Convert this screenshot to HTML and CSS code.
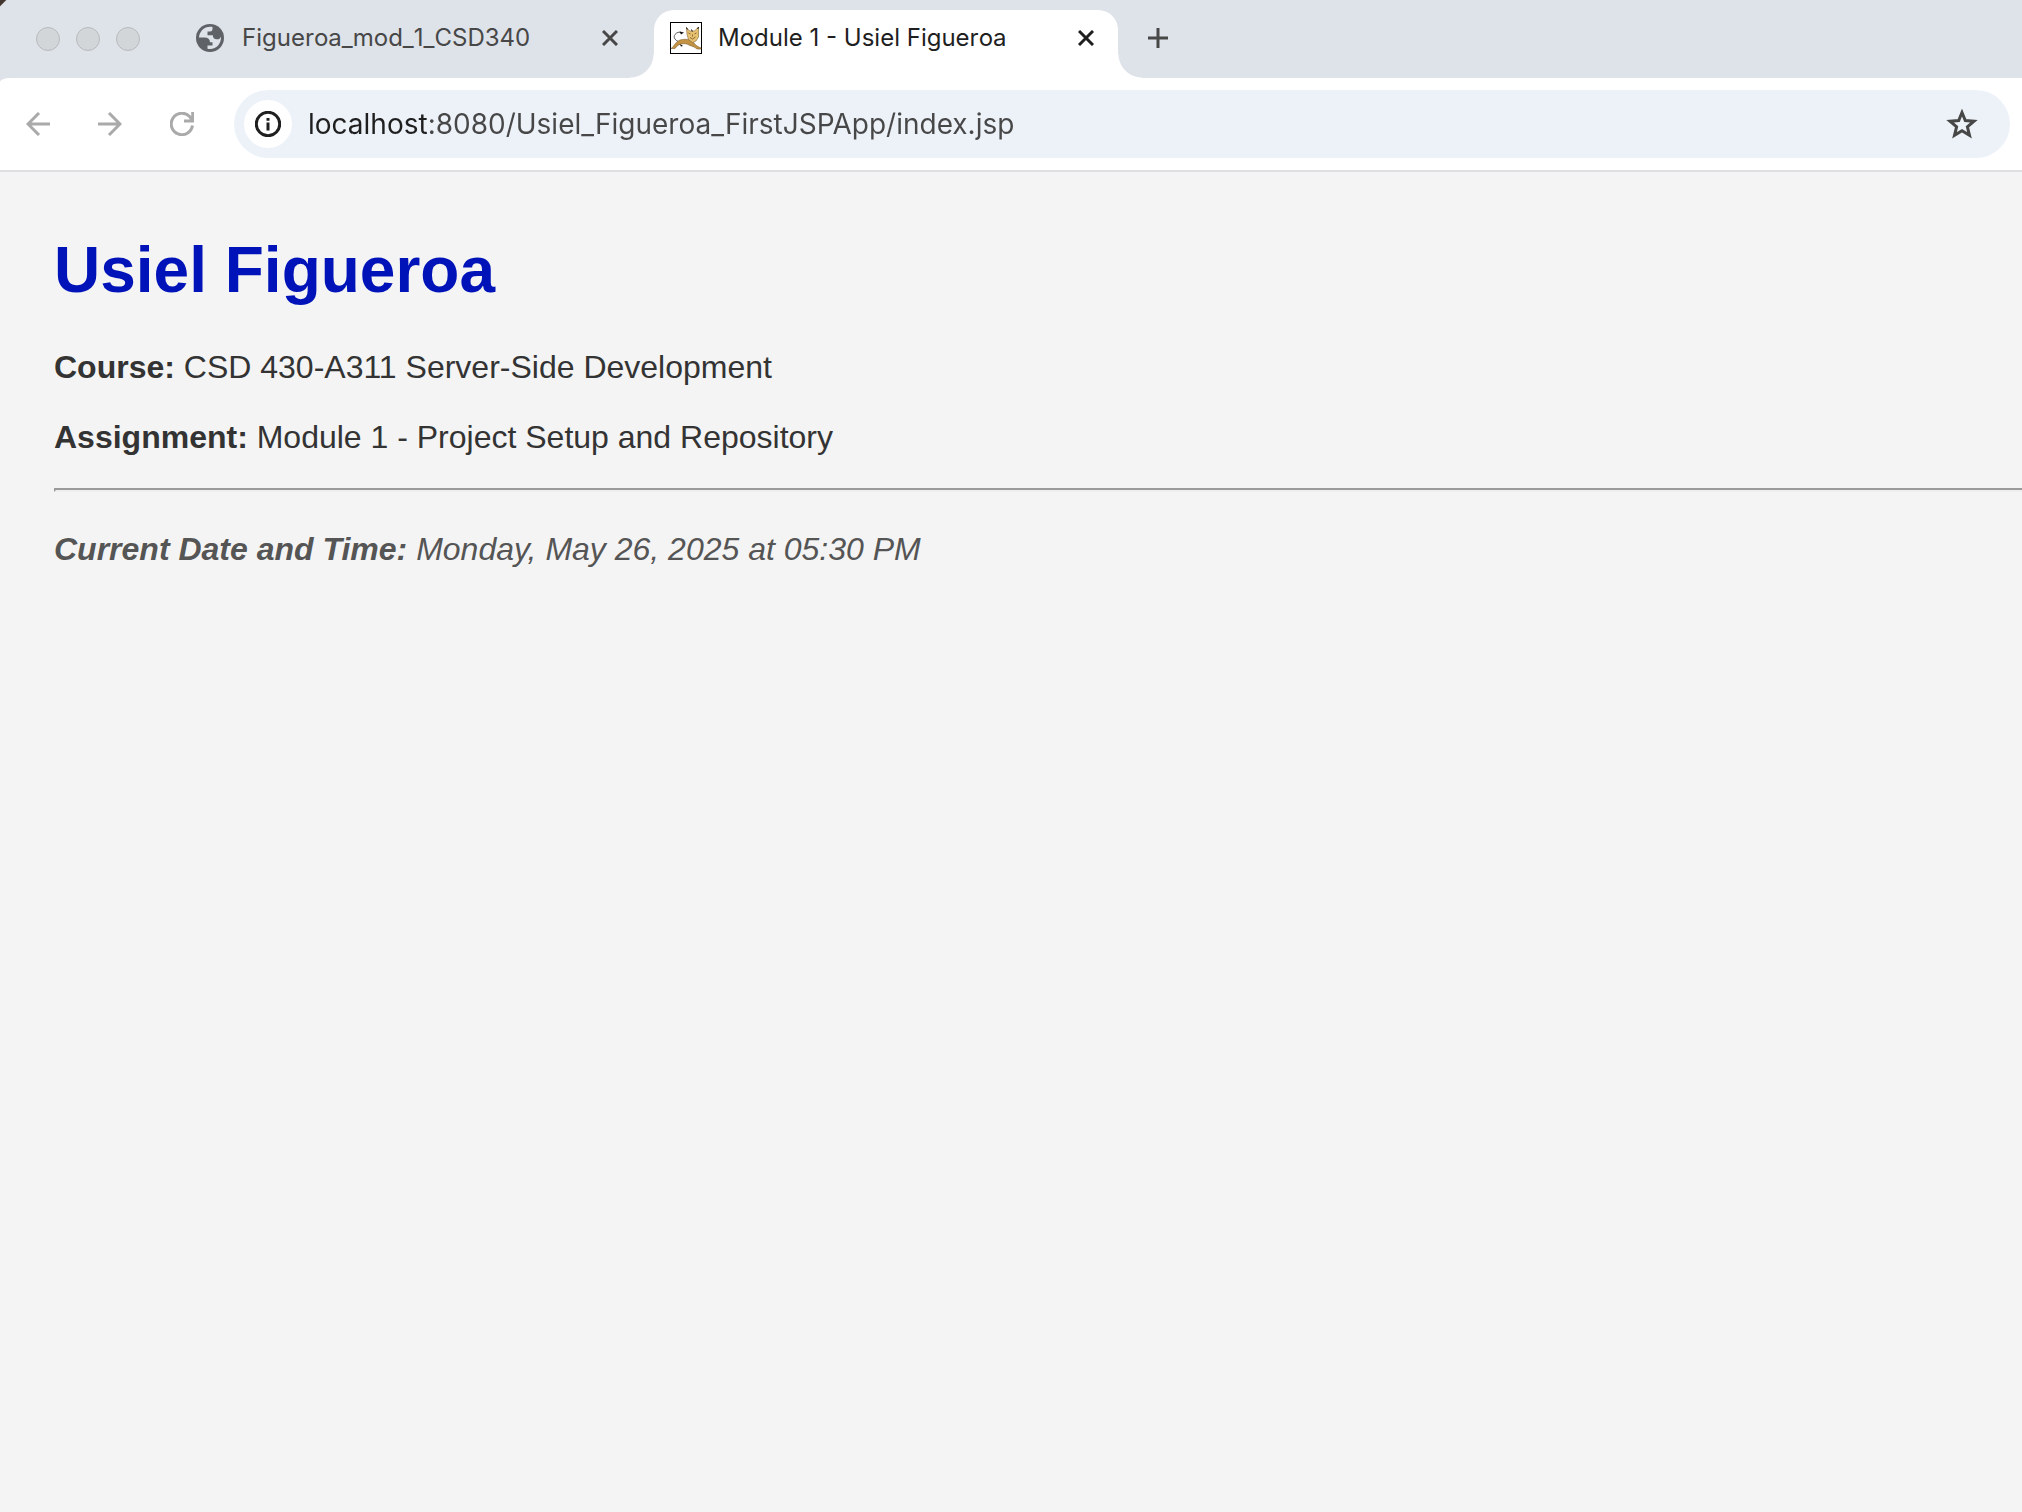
FILE: index.html
```html
<!DOCTYPE html>
<html lang="en">
<head>
<meta charset="utf-8">
<title>Module 1 - Usiel Figueroa</title>
<link rel="stylesheet" href="styles.css">
</head>
<body>
<header class="browser">
  <div class="tabstrip">
    <div class="lights">
      <button class="light" aria-label="Close window"></button>
      <button class="light" aria-label="Minimize window"></button>
      <button class="light" aria-label="Zoom window"></button>
    </div>
    <div class="tab">
      <svg class="globe" viewBox="0 0 28 28" aria-hidden="true">
        <circle cx="14" cy="14" r="14" fill="#5f6368"/>
        <path d="M16.500 3C9.500 1.500 3.500 6.500 3 13.500H8.500C12 13.500 14 15.200 14 18.200H16.500V21.500H11.500V24.700C19 26.500 25.500 20.500 25 12.500C24 15 22.500 15.700 20 15.200C17.800 14.800 17 13.500 16.800 11.200H11.500V7.500H14C16 7.500 16.800 6 16.500 3Z" fill="#dee2e9"/>
      </svg>
      <span class="tab-title">Figueroa_mod_1_CSD340</span>
      <button class="tab-close" aria-label="Close tab"><svg viewBox="0 0 16 16"><path d="M1 1L15 15M15 1L1 15"/></svg></button>
    </div>
    <div class="tab tab-active">
      <svg class="favicon" viewBox="0 0 32 32" aria-hidden="true">
        <rect x=".5" y=".5" width="31" height="31" fill="#fff" stroke="#000"/>
        <path d="M10 20C5 19 3 15 5 12.500C7 10 9 10 12 10.500" fill="none" stroke="#333" stroke-width=".8"/>
        <path d="M9.500 9.500L14 10.500 11 12.500z M9 21L13 24 11 24.500z" fill="#111"/>
        <path d="M1 26.500C4 25 5 20 10 18C14 17 17 17 20 18L24 21C26 24 29 25 31 26V27H27C24 24 20 24 17 22C12 21 8 22 5 26.500Z" fill="#c39343" stroke="#7d6130" stroke-width=".6"/>
        <path d="M16.500 5.500l3 3.500h5l4-4v10l-2.500 4-3.500 1.500-4-3-1.500-5z" fill="#e8c170" stroke="#806638" stroke-width=".6"/>
        <path d="M18.500 11l2 1M24.500 12l2-1M20 15.500l2.500 1.500 3-2M22.500 12.500v2" fill="none" stroke="#6e5628" stroke-width=".8"/>
        <path d="M21.500 7.500l.8 2M16.500 5.500l.8 2M28.500 5l-.8 2" stroke="#111"/>
      </svg>
      <span class="tab-title">Module 1 - Usiel Figueroa</span>
      <button class="tab-close" aria-label="Close tab"><svg viewBox="0 0 16 16"><path d="M1 1L15 15M15 1L1 15"/></svg></button>
    </div>
    <button class="new-tab" aria-label="New tab"><svg viewBox="0 0 20 20"><path d="M10 0V20M0 10H20"/></svg></button>
  </div>
  <div class="toolbar">
    <nav class="nav">
      <button class="nav-button" aria-label="Back"><svg viewBox="0 0 24 24"><path d="M24 12H2M13 1L2 12L13 23"/></svg></button>
      <button class="nav-button" aria-label="Forward"><svg viewBox="0 0 24 24"><path d="M0 12H22M11 1L22 12L11 23"/></svg></button>
      <button class="nav-button" aria-label="Reload"><svg viewBox="0 0 24 24"><path d="M22.500 13.500A10.700 10.700 0 1 1 19.600 4.500L22 8M22.700 0V9H14"/></svg></button>
    </nav>
    <div class="omnibox">
      <button class="site-info" aria-label="View site information"><svg viewBox="0 0 26 26"><circle cx="13" cy="13" r="11.700"/><path d="M13 11.500V19.500M13 7V9.700"/></svg></button>
      <input class="url" type="text" aria-label="Address" value="localhost:8080/Usiel_Figueroa_FirstJSPApp/index.jsp">
      <button class="bookmark" aria-label="Bookmark this page"><svg viewBox="0 0 32 30"><path d="M16 3.500L19.300 11.500L28 12.200L21.400 17.900L23.500 26.400L16 21.800L8.500 26.400L10.600 17.900L4 12.200L12.700 11.500Z"/></svg></button>
    </div>
  </div>
</header>
<main class="page">
  <h1>Usiel Figueroa</h1>
  <p><strong>Course:</strong> CSD 430-A311 Server-Side Development</p>
  <p><strong>Assignment:</strong> Module 1 - Project Setup and Repository</p>
  <hr>
  <p class="date"><strong>Current Date and Time:</strong> Monday, May 26, 2025 at 05:30 PM</p>
</main>
</body>
</html>
```
FILE: styles.css
```css
* { box-sizing: border-box; }

body {
  margin: 0;
  min-height: 100vh;
  background: #f4f4f4;
  color: #333;
  font-family: "Liberation Sans", Arial, sans-serif;
  overflow-x: hidden;
}

button {
  padding: 0;
  border: 0;
  background: none;
  color: inherit;
  display: grid;
  place-items: center;
  flex: none;
}

svg { display: block; flex: none; }

button svg { fill: none; stroke: currentColor; }

.browser {
  font-family: Inter, "Liberation Sans", sans-serif;
  background: linear-gradient(135deg, #40352f 4px, #dee2e9 5px);
}

.tabstrip {
  display: flex;
  height: 78px;
  padding: 10px 0 0 36px;
}

.lights {
  display: flex;
  align-items: center;
  gap: 16px;
  height: 58px;
  margin-right: 40px;
}

.light {
  width: 24px;
  height: 24px;
  border: 1px solid #b9bbbe;
  border-radius: 50%;
  background: #d3d6d9;
}

.tab {
  display: flex;
  align-items: center;
  width: 474px;
  height: 68px;
  padding: 0 36px 12px 16px;
  color: #474747;
  font-size: 24px;
}

.tab-active {
  position: relative;
  width: 464px;
  padding-right: 24px;
  border-radius: 20px 20px 0 0;
  background: #fff;
  color: #1f1f1f;
}

.tab-active::before,
.tab-active::after {
  content: "";
  position: absolute;
  bottom: 0;
  width: 24px;
  height: 24px;
}

.tab-active::before {
  right: 100%;
  background: radial-gradient(circle at 0 0, transparent 23px, #fff 24px);
}

.tab-active::after {
  left: 100%;
  background: radial-gradient(circle at 100% 0, transparent 23px, #fff 24px);
}

.globe { width: 28px; height: 28px; margin-right: 18px; }
.favicon { width: 32px; height: 32px; margin-right: 16px; }

.tab-title {
  flex: 1;
  white-space: nowrap;
  line-height: 32px;
  font-kerning: none;
}

.tab-close { width: 16px; height: 32px; }
.tab-close svg { width: 16px; height: 16px; stroke-width: 3; }

.new-tab { width: 80px; height: 56px; color: #474747; }
.new-tab svg { width: 20px; height: 20px; stroke-width: 3; }

.toolbar {
  display: flex;
  align-items: center;
  height: 94px;
  padding: 0 12px 0 2px;
  border-bottom: 2px solid #dedfe1;
  border-top-left-radius: 10px 4px;
  background: #fff;
}

.nav { display: flex; width: 232px; }
.nav-button { width: 72px; height: 68px; color: #aaa; }
.nav-button svg { width: 24px; height: 24px; stroke-width: 3; }

.omnibox {
  display: flex;
  flex: 1;
  align-items: center;
  height: 68px;
  padding: 0 32px 0 10px;
  border-radius: 34px;
  background: #edf2f9;
}

.site-info {
  width: 48px;
  height: 48px;
  border-radius: 50%;
  background: #fff;
  color: #1f1f1f;
}

.site-info svg { width: 26px; height: 26px; stroke-width: 3; }

/* The host part of the address is darker than the path. */
.url {
  flex: 1;
  min-width: 0;
  height: 48px;
  margin: 0 16px;
  padding: 0;
  border: 0;
  outline: 0;
  font: 28px Inter, "Liberation Sans", sans-serif;
  color: #474747;
  background: linear-gradient(90deg, #1f1f1f 120px, #474747 120px);
  -webkit-background-clip: text;
  background-clip: text;
  -webkit-text-fill-color: transparent;
}

.bookmark { color: #474747; }
.bookmark svg { width: 32px; height: 30px; stroke-width: 3; }

.page {
  padding: 62px 0 32px 54px;
  font-size: 32px;
  line-height: 38px;
}

.page h1 {
  margin: 0 0 42px;
  color: #0013b9;
  font-size: 64px;
  line-height: 72px;
}

.page p { margin: 0 0 32px; }

.page hr {
  margin: 0 0 38px;
  border: solid;
  border-width: 2px 0 2px 2px;
  border-color: #9a9a9a #eee #eee #9a9a9a;
}

.page .date { color: #555; font-style: italic; }
```
